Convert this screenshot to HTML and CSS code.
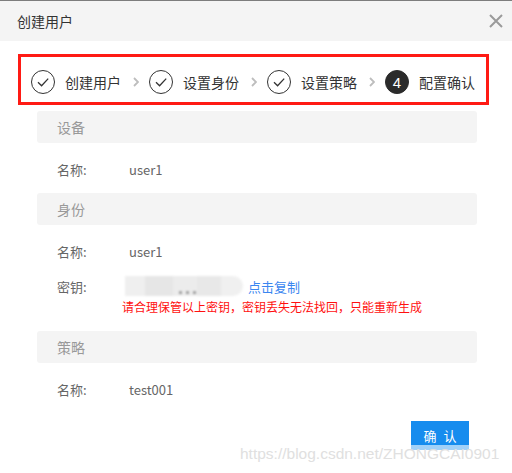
FILE: index.html
```html
<!DOCTYPE html>
<html lang="zh-CN">
<head>
<meta charset="utf-8">
<title>创建用户</title>
<link rel="stylesheet" href="styles.css">
</head>
<body>
<div class="dialog">
  <header class="dlg-head">
    <span class="dlg-title">创建用户</span>
    <svg class="close" width="14" height="14" viewBox="0 0 14 14"><path d="M1 1L13 13M13 1L1 13" stroke="#9a9a9a" stroke-width="2" fill="none"/></svg>
  </header>

  <div class="steps">
    <div class="step">
      <span class="circle"><svg width="24" height="24" viewBox="0 0 24 24"><path d="M7 12.2L10.6 15.8L17.2 8.6" stroke="#333" stroke-width="1.3" fill="none"/></svg></span>
      <span class="step-text">创建用户</span>
    </div>
    <svg class="chev" width="6" height="10" viewBox="0 0 6 10"><path d="M1 1L5 5L1 9" stroke="#bdbdbd" stroke-width="1.8" fill="none"/></svg>
    <div class="step">
      <span class="circle"><svg width="24" height="24" viewBox="0 0 24 24"><path d="M7 12.2L10.6 15.8L17.2 8.6" stroke="#333" stroke-width="1.3" fill="none"/></svg></span>
      <span class="step-text">设置身份</span>
    </div>
    <svg class="chev" width="6" height="10" viewBox="0 0 6 10"><path d="M1 1L5 5L1 9" stroke="#bdbdbd" stroke-width="1.8" fill="none"/></svg>
    <div class="step">
      <span class="circle"><svg width="24" height="24" viewBox="0 0 24 24"><path d="M7 12.2L10.6 15.8L17.2 8.6" stroke="#333" stroke-width="1.3" fill="none"/></svg></span>
      <span class="step-text">设置策略</span>
    </div>
    <svg class="chev" width="6" height="10" viewBox="0 0 6 10"><path d="M1 1L5 5L1 9" stroke="#bdbdbd" stroke-width="1.8" fill="none"/></svg>
    <div class="step">
      <span class="circle active">4</span>
      <span class="step-text">配置确认</span>
    </div>
  </div>

  <section class="sect">
    <div class="sect-bar">设备</div>
    <div class="sect-body">
      <div class="row"><span class="lbl">名称:</span><span class="val">user1</span></div>
    </div>
  </section>

  <section class="sect">
    <div class="sect-bar">身份</div>
    <div class="sect-body">
      <div class="row"><span class="lbl">名称:</span><span class="val">user1</span></div>
      <div class="row">
        <span class="lbl">密钥:</span>
        <span class="key-blur"><i class="b1"></i><i class="b2"></i><i class="b3"></i><i class="b4"></i><i class="b5"></i><b class="dot d1"></b><b class="dot d2"></b><b class="dot d3"></b></span>
        <a class="copy">点击复制</a>
      </div>
      <div class="warn">请合理保管以上密钥，密钥丢失无法找回，只能重新生成</div>
    </div>
  </section>

  <section class="sect">
    <div class="sect-bar">策略</div>
    <div class="sect-body">
      <div class="row"><span class="lbl">名称:</span><span class="val">test001</span></div>
    </div>
  </section>

  <div class="footer">
    <button class="btn">确 认</button>
  </div>
  <div class="watermark">https://blog.csdn.net/ZHONGCAI0901</div>
</div>
</body>
</html>
```
FILE: styles.css
```css
html, body {
  margin: 0;
  padding: 0;
  background: #fff;
}
body {
  width: 512px;
  height: 473px;
  overflow: hidden;
  font-family: "Noto Sans CJK SC", "Noto Sans", sans-serif;
}
.dialog {
  position: relative;
  width: 512px;
  height: 473px;
}
.dlg-head {
  box-sizing: border-box;
  height: 41px;
  border-top: 1px solid #7d7d7d;
  background: #f4f4f4;
  display: flex;
  align-items: center;
  justify-content: space-between;
  padding: 0 9px 0 17px;
}
.dlg-title {
  font-size: 14px;
  color: #333;
}
.close {
  display: block;
}
.steps {
  box-sizing: border-box;
  margin: 13px 0 0 18px;
  width: 471px;
  height: 51px;
  border: 3px solid #ff1a14;
  display: flex;
  align-items: flex-start;
  padding: 13px 0 0 10px;
}
.step {
  display: flex;
  align-items: center;
  height: 24px;
}
.circle {
  box-sizing: border-box;
  width: 24px;
  height: 24px;
  border: 1px solid #333;
  border-radius: 50%;
  display: flex;
  align-items: center;
  justify-content: center;
}
.circle svg {
  display: block;
  margin: -1px;
}
.circle.active {
  background: #2b2b2b;
  border-color: #2b2b2b;
  color: #fff;
  font-family: "Liberation Sans", sans-serif;
  font-size: 15px;
}
.step-text {
  margin-left: 10px;
  font-size: 14px;
  color: #333;
  line-height: 24px;
  width: 56px;
  white-space: nowrap;
}
.chev {
  margin: 7px 10px 0 12px;
  flex: none;
}
.sect {
  margin: 6px 35px 0 37px;
}
.sect + .sect {
  margin-top: 0;
}
.sect-bar {
  height: 32px;
  background: #f4f4f4;
  border-radius: 3px;
  padding-left: 20px;
  font-size: 14px;
  color: #999;
  line-height: 32px;
}
.sect-body {
  padding: 16px 0 14px 20px;
  display: flex;
  flex-direction: column;
  gap: 15px;
}
.row {
  display: flex;
  align-items: center;
  height: 20px;
  font-size: 13px;
  color: #666;
}
.lbl {
  width: 72px;
  flex: none;
}
.val {
  color: #666;
}
.key-blur {
  position: relative;
  display: flex;
  width: 118px;
  height: 20px;
  margin-left: -4px;
  filter: blur(1px);
}
.key-blur i {
  display: block;
  height: 20px;
}
.key-blur .b1 { width: 20px; background: #efefef; }
.key-blur .b2 { width: 28px; background: #e6e6e6; }
.key-blur .b3 { width: 24px; background: #ececec; }
.key-blur .b4 { width: 24px; background: #e8e8e8; }
.key-blur .b5 { width: 22px; background: #f0f0f0; border-radius: 0 10px 10px 0; }
.key-blur .dot {
  position: absolute;
  top: 15px;
  width: 3px;
  height: 3px;
  background: #8a8a8a;
  border-radius: 50%;
}
.key-blur .d1 { left: 54px; }
.key-blur .d2 { left: 61px; }
.key-blur .d3 { left: 68px; }
.copy {
  margin-left: 5px;
  color: #3a86f0;
  font-size: 13px;
  cursor: pointer;
}
.warn {
  margin-top: -14px;
  margin-left: 65px;
  height: 20px;
  line-height: 20px;
  font-size: 12px;
  color: #ff1010;
}
.footer {
  display: flex;
  justify-content: flex-end;
  padding: 8px 43px 0 0;
}
.btn {
  width: 58px;
  height: 29px;
  border: none;
  border-radius: 0;
  background: #168cee;
  color: #fff;
  font-family: "Noto Sans CJK SC", sans-serif;
  font-size: 13px;
  letter-spacing: 2px;
  padding: 0 0 0 2px;
}
.watermark {
  position: absolute;
  left: 240px;
  top: 445px;
  font-family: "Liberation Sans", Arial, sans-serif;
  font-size: 15.5px;
  color: #e0e0e0;
  white-space: nowrap;
  background: rgba(255,255,255,0.6);
  padding-bottom: 10px;
}
```
